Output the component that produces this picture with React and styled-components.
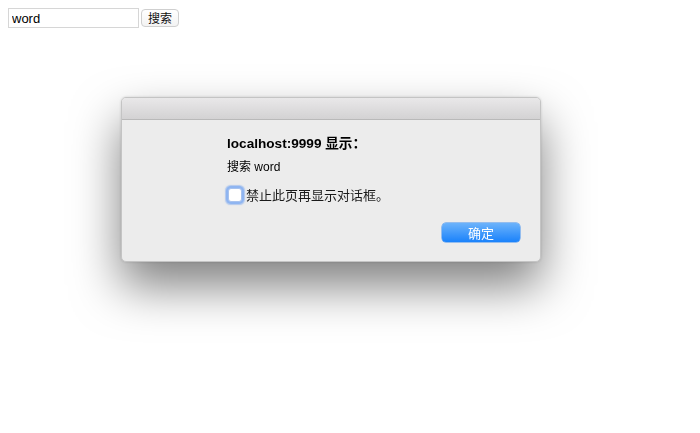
import React from 'react';
import styled, { createGlobalStyle } from 'styled-components';

const GlobalStyle = createGlobalStyle`
  body {
    margin: 8px;
    background: #ffffff;
    font-family: "Liberation Sans", "Noto Sans CJK SC", sans-serif;
  }
`;

const SearchBar = styled.form`
  display: flex;
  align-items: center;
  gap: 2px;
`;

const SearchInput = styled.input`
  width: 131px;
  height: 20px;
  box-sizing: border-box;
  border: 1px solid #d6d6d6;
  padding: 0 3px;
  font-family: "Liberation Sans", sans-serif;
  font-size: 13px;
  color: #000;
  outline: none;
`;

const SearchButton = styled.button`
  height: 18px;
  box-sizing: border-box;
  padding: 0 6px;
  border: 1px solid #cfcfcf;
  border-radius: 4px;
  background: linear-gradient(#ffffff, #f3f3f3);
  font-family: "Noto Sans CJK SC", sans-serif;
  font-size: 12px;
  line-height: 16px;
  color: #111;
`;

const Dialog = styled.div`
  position: fixed;
  left: 121px;
  top: 97px;
  width: 420px;
  height: 165px;
  box-sizing: border-box;
  border: 1px solid #c4c4c4;
  border-radius: 5px;
  background: #ececec;
  box-shadow: 0 24px 48px rgba(0, 0, 0, 0.5), 0 0 3px rgba(0, 0, 0, 0.15);
  display: flex;
  flex-direction: column;
  overflow: hidden;
`;

const TitleBar = styled.div`
  height: 21px;
  flex-shrink: 0;
  background: linear-gradient(#e9e8e9, #d3d2d3);
  border-bottom: 1px solid #b9b9b9;
`;

const Body = styled.div`
  flex: 1;
  padding: 16px 20px 0 105px;
  display: flex;
  flex-direction: column;
`;

const Title = styled.div`
  font-family: "Liberation Sans", "Noto Sans CJK SC", sans-serif;
  font-weight: bold;
  font-size: 13.6px;
  line-height: 16px;
  color: #000;
`;

const Message = styled.div`
  margin-top: 8px;
  font-family: "Liberation Sans", "Noto Sans CJK SC", sans-serif;
  font-size: 12px;
  line-height: 14px;
  color: #000;
`;

const CheckRow = styled.label`
  margin-top: 12px;
  display: flex;
  align-items: center;
  gap: 4px;
  font-family: "Noto Sans CJK SC", sans-serif;
  font-size: 13px;
  line-height: 18px;
  color: #1a1a1a;
`;

const CheckBox = styled.span`
  width: 12px;
  height: 12px;
  margin-left: 1px;
  border-radius: 3px;
  background: #fff;
  border: 1px solid #a7c2ee;
  box-shadow: 0 0 0 2px #8fb5f1, 0 0 1px 2.5px rgba(120, 165, 240, 0.5);
`;

const Actions = styled.div`
  margin-top: 19px;
  display: flex;
  justify-content: flex-end;
`;

const OkButton = styled.button`
  width: 78px;
  height: 19px;
  border: none;
  border-radius: 4px;
  background: linear-gradient(#6cb3fb, #1a82fb);
  box-shadow: 0 0 0 0.5px #3d8ef0;
  color: #fff;
  font-family: "Noto Sans CJK SC", sans-serif;
  font-size: 13px;
  line-height: 19px;
  padding: 0;
`;

export default function App() {
  return (
    <>
      <GlobalStyle />
      <SearchBar onSubmit={(e) => e.preventDefault()}>
        <SearchInput defaultValue="word" />
        <SearchButton type="button">搜索</SearchButton>
      </SearchBar>
      <Dialog>
        <TitleBar />
        <Body>
          <Title>localhost:9999 显示：</Title>
          <Message>搜索 word</Message>
          <CheckRow>
            <CheckBox />
            禁止此页再显示对话框。
          </CheckRow>
          <Actions>
            <OkButton>确定</OkButton>
          </Actions>
        </Body>
      </Dialog>
    </>
  );
}
